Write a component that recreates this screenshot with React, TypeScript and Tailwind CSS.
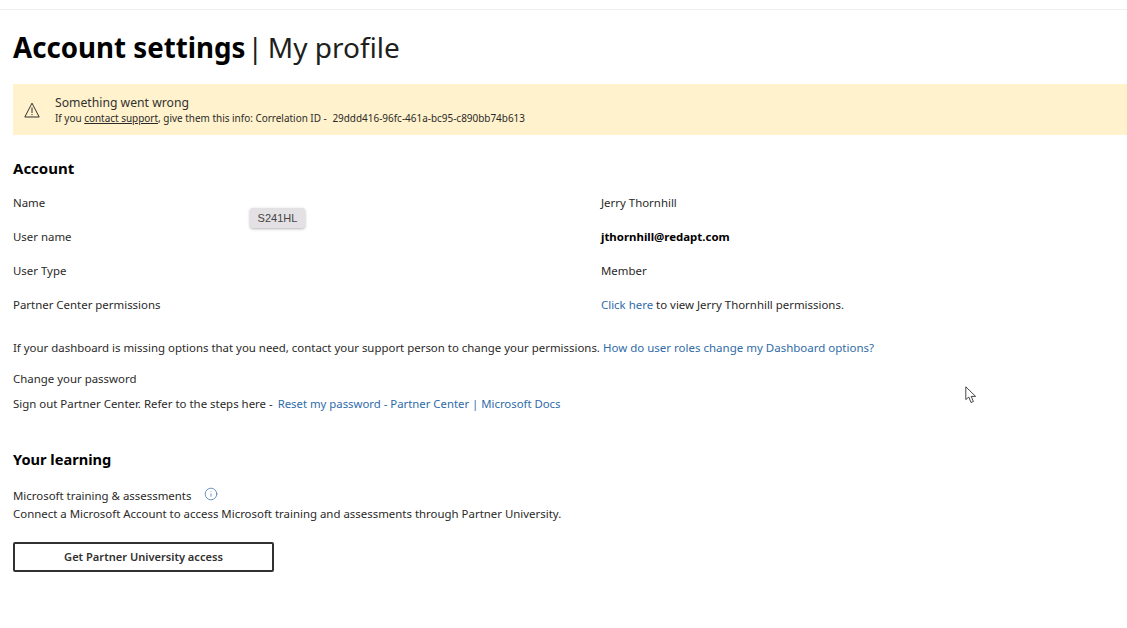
import { Info } from "lucide-react";

const font = { fontFamily: '"Noto Sans", "Open Sans", sans-serif' };

const rows = [
  { label: "Name", value: <span>Jerry Thornhill</span> },
  { label: "User name", value: <span className="font-bold text-black">jthornhill@redapt.com</span> },
  { label: "User Type", value: <span>Member</span> },
  {
    label: "Partner Center permissions",
    value: (
      <span>
        <a className="text-[#2f6ca8]">Click here</a> to view Jerry Thornhill permissions.
      </span>
    ),
  },
];

function WarningIcon() {
  return (
    <svg width="16" height="16" viewBox="0 0 16 16" fill="none" stroke="#323130" strokeWidth="1">
      <path d="M8 1.2 L15.2 15 H0.8 Z" strokeLinejoin="round" />
      <path d="M8 5.5 V11" />
      <path d="M8 12 V13.2" />
    </svg>
  );
}

function Cursor() {
  return (
    <svg width="12" height="18" viewBox="0 0 12 18" fill="#fff" stroke="#333" strokeWidth="0.9">
      <path d="M0.8 0.8 V13.6 L3.8 11 L6 16.5 L8.4 15.5 L6.2 10.4 H10.6 Z" />
    </svg>
  );
}

export default function App() {
  return (
    <div
      style={font}
      className="relative h-[628px] w-[1127px] overflow-hidden bg-white text-[11.43px] leading-[16px] text-[#2b2a29]"
    >
      <div className="h-[10px] border-b border-[#eeeeee]" />

      <h1 className="mt-[18px] flex items-baseline pl-[13px] text-[28px] leading-[38px] text-black">
        <span className="text-[27.7px] font-bold">Account settings</span>
        <span className="ml-[2px] text-[#201f1e]">|</span>
        <span className="ml-[5px] text-[#201f1e]">My profile</span>
      </h1>

      <div className="mt-[18px] ml-[13px] flex h-[51px] items-center gap-[15px] bg-[#fff2cc] pl-[11px]">
        <WarningIcon />
        <div className="mt-[1px]">
          <div className="text-[12.2px] leading-[15px] text-[#323130]">Something went wrong</div>
          <div className="mt-[1px] text-[9.95px] leading-[14px]">
            If you <span className="underline">contact support</span>, give them this info: Correlation ID -{" "}
            <span className="ml-[3px]">29ddd416-96fc-461a-bc95-c890bb74b613</span>
          </div>
        </div>
      </div>

      <section className="pl-[13px]">
        <h2 className="mt-[23px] text-[15px] leading-[20px] font-bold text-black">Account</h2>
        <div className="mt-[17px] flex flex-col gap-[18px]">
          {rows.map((row) => (
            <div key={row.label} className="grid grid-cols-[588px_1fr]">
              <div>{row.label}</div>
              <div>{row.value}</div>
            </div>
          ))}
        </div>

        <p className="mt-[27px]">
          If your dashboard is missing options that you need, contact your support person to change your permissions.{" "}
          <a className="text-[11.5px] text-[#2f6ca8]">How do user roles change my Dashboard options?</a>
        </p>
        <p className="mt-[15px]">Change your password</p>
        <p className="mt-[9px]">
          Sign out Partner Center. Refer to the steps here -{" "}
          <a className="ml-[2px] text-[11.35px] text-[#2f6ca8]">Reset my password - Partner Center | Microsoft Docs</a>
        </p>

        <h2 className="mt-[37px] text-[14.6px] leading-[20px] font-bold text-black">Your learning</h2>
        <div className="mt-[18px] flex items-center">
          <span>Microsoft training &amp; assessments</span>
          <Info size={14} strokeWidth={1.2} className="mb-[4px] ml-[13px] text-[#2f6ca8]" />
        </div>
        <p className="mt-[1px]">
          Connect a Microsoft Account to access Microsoft training and assessments through Partner University.
        </p>
        <button className="mt-[20px] h-[30px] w-[261px] rounded-[2px] border-2 border-[#323130] bg-white text-[11.1px] font-semibold text-[#323130]">
          Get Partner University access
        </button>
      </section>

      <div
        style={{ fontFamily: '"Liberation Sans", sans-serif' }}
        className="absolute top-[208px] left-[250px] flex h-[20px] w-[55px] items-center justify-center rounded-[3px] bg-[#e4e1e4] text-[11px] text-[#444444] shadow-[0_1px_3px_rgba(0,0,0,0.3)]"
      >
        S241HL
      </div>
      <div className="absolute top-[386px] left-[965px]">
        <Cursor />
      </div>
    </div>
  );
}
